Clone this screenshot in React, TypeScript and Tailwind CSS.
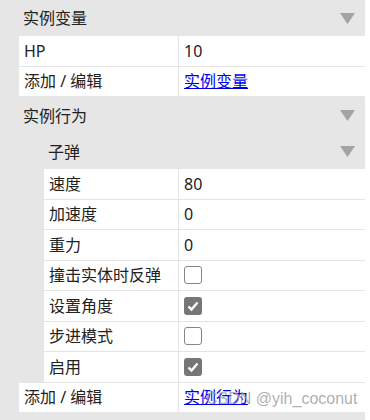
import React from 'react';

type Row = { label: string; value?: string; link?: string; check?: boolean };

const vars: Row[] = [
  { label: 'HP', value: '10' },
  { label: '添加 / 编辑', link: '实例变量' },
];

const bullet: Row[] = [
  { label: '速度', value: '80' },
  { label: '加速度', value: '0' },
  { label: '重力', value: '0' },
  { label: '撞击实体时反弹', check: false },
  { label: '设置角度', check: true },
  { label: '步进模式', check: false },
  { label: '启用', check: true },
];

function Arrow() {
  return (
    <svg width="15" height="11" viewBox="0 0 15 11" className="shrink-0">
      <path d="M0 0 H15 L7.5 11 Z" fill="#a3a3a3" />
    </svg>
  );
}

function Checkbox({ checked }: { checked: boolean }) {
  if (checked) {
    return (
      <div className="w-[18px] h-[18px] rounded-[3px] bg-[#767676] flex items-center justify-center">
        <svg width="14" height="14" viewBox="0 0 14 14">
          <path d="M2.5 7.5 L5.5 10.5 L11.5 3.5" fill="none" stroke="#fff" strokeWidth="2.4" />
        </svg>
      </div>
    );
  }
  return <div className="w-[18px] h-[18px] rounded-[3px] border-[1.5px] border-[#858585] bg-white" />;
}

function Cell({ row }: { row: Row }) {
  if (row.link) {
    return <span className="text-[#0000ee] underline">{row.link}</span>;
  }
  if (row.check !== undefined) return <Checkbox checked={row.check} />;
  return <span>{row.value}</span>;
}

function PropRow({ row, indent }: { row: Row; indent?: boolean }) {
  return (
    <div className={`flex h-[30.5px] border-b border-[#e4e4e4] ${indent ? 'ml-[44px]' : 'ml-[19px]'}`}>
      <div
        className={`${indent ? 'w-[135px]' : 'w-[160px]'} flex items-center pl-[5px] bg-white border-r border-[#e4e4e4] whitespace-nowrap`}
      >
        {row.label}
      </div>
      <div className="flex-1 flex items-center pl-[5px] bg-white">
        <Cell row={row} />
      </div>
    </div>
  );
}

function Header({ title, indent, h }: { title: string; indent?: boolean; h: string }) {
  return (
    <div className={`flex items-center justify-between pr-[10px] ${h} ${indent ? 'pl-[48px]' : 'pl-[23px]'}`}>
      <span>{title}</span>
      <Arrow />
    </div>
  );
}

export default function App() {
  return (
    <div className="w-[370px] h-[420px] bg-white relative overflow-hidden font-['Noto_Sans','Noto_Sans_CJK_SC',sans-serif] text-[16px] leading-none text-[#222]">
      <div className="w-[365px] h-[420px] bg-[#e6e6e6]">
        <Header title="实例变量" h="h-[36px]" />
        {vars.map((r) => (
          <PropRow key={r.label} row={r} />
        ))}
        <Header title="实例行为" h="h-[37px]" />
        <Header title="子弹" indent h="h-[35px]" />
        {bullet.map((r) => (
          <PropRow key={r.label} row={r} indent />
        ))}
        <PropRow row={{ label: '添加 / 编辑', link: '实例行为' }} />
      </div>
      {/* watermark */}
      <div className="absolute left-[206px] top-[391px] text-[16px] text-[#9a9a9a]/80 font-['Liberation_Sans',sans-serif] whitespace-nowrap">
        CSDN @yih_coconut
      </div>
    </div>
  );
}
